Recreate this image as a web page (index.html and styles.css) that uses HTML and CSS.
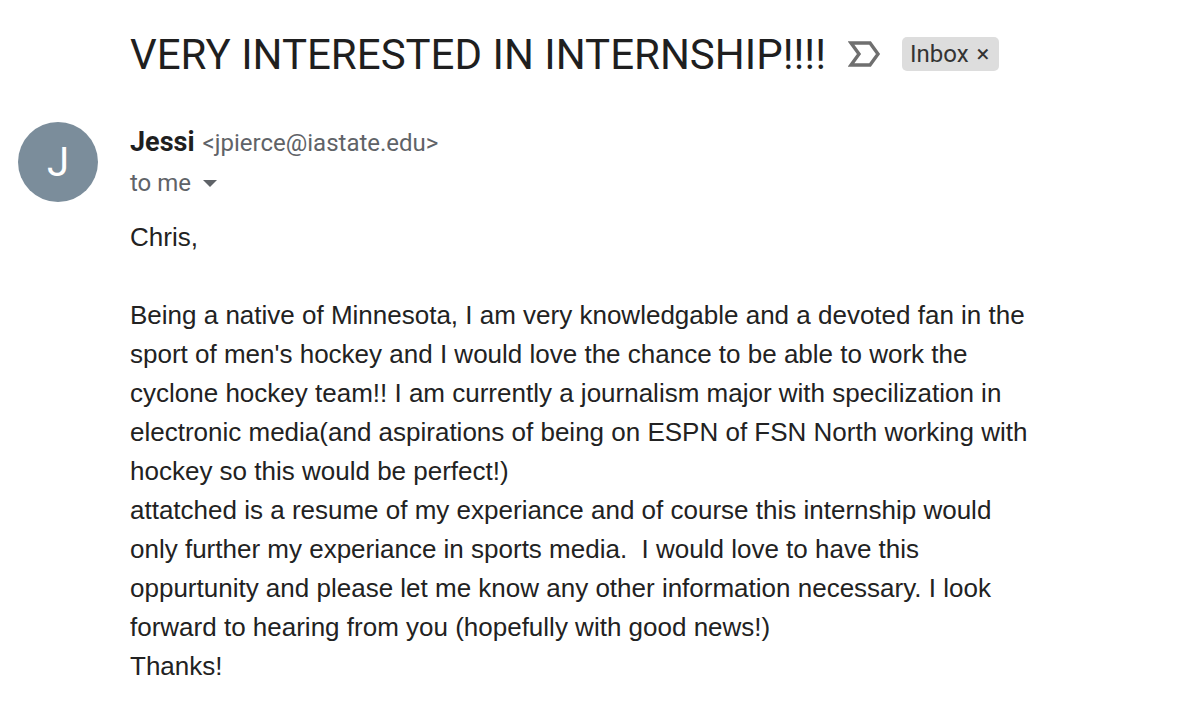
FILE: index.html
```html
<!DOCTYPE html>
<html>
<head>
<meta charset="utf-8">
<link rel="stylesheet" href="styles.css">
</head>
<body>
<div class="page">
  <div class="subject-row">
    <h1 class="subject">VERY INTERESTED IN INTERNSHIP!!!!</h1>
    <svg class="important" width="34" height="28" viewBox="0 0 34 28">
      <path d="M3 3 H22 L30 14 L22 25 H3 L11 14 Z" fill="none" stroke="#6f6f6f" stroke-width="3.4" stroke-linejoin="miter"/>
    </svg>
    <span class="chip">Inbox <span class="chip-x">×</span></span>
  </div>
  <div class="message">
    <div class="avatar">J</div>
    <div class="content">
      <div class="sender"><span class="name">Jessi</span> <span class="email">&lt;jpierce@iastate.edu&gt;</span></div>
      <div class="to">to me <span class="caret"></span></div>
      <div class="body">Chris,<br><br>Being a native of Minnesota, I am very knowledgable and a devoted fan in the<br>sport of men's hockey and I would love the chance to be able to work the<br>cyclone hockey team!! I am currently a journalism major with specilization in<br>electronic media(and aspirations of being on ESPN of FSN North working with<br>hockey so this would be perfect!)<br>attatched is a resume of my experiance and of course this internship would<br>only further my experiance in sports media.&nbsp; I would love to have this<br>oppurtunity and please let me know any other information necessary. I look<br>forward to hearing from you (hopefully with good news!)<br>Thanks!</div>
    </div>
  </div>
</div>
</body>
</html>
```
FILE: styles.css
```css
html, body {
  margin: 0;
  padding: 0;
  background: #ffffff;
}
.page {
  width: 1178px;
  height: 714px;
  overflow: hidden;
  font-family: "Liberation Sans", Arial, sans-serif;
  color: #222222;
}
.subject-row {
  display: flex;
  align-items: center;
  padding: 24px 0 0 130px;
  height: 60px;
}
.subject {
  margin: 0;
  font-family: Roboto, "Open Sans", sans-serif;
  font-weight: 400;
  font-size: 42px;
  color: #1f1f1f;
  letter-spacing: 0;
}
.important {
  margin-left: 22px;
}
.chip {
  margin-left: 20px;
  background: #dddddd;
  border-radius: 5px;
  height: 34px;
  padding: 0 10px 0 8px;
  display: flex;
  align-items: center;
  font-family: Roboto, sans-serif;
  font-size: 24px;
  color: #333;
}
.chip-x {
  margin-left: 8px;
  font-size: 24px;
}
.message {
  display: flex;
  margin-top: 38px;
}
.avatar {
  width: 80px;
  height: 80px;
  border-radius: 50%;
  background: #7b8d9b;
  color: #fff;
  margin-left: 18px;
  margin-right: 32px;
  display: flex;
  align-items: center;
  justify-content: center;
  font-family: Roboto, sans-serif;
  font-size: 40px;
}
.content {
  display: flex;
  flex-direction: column;
}
.sender {
  line-height: 40px;
  font-family: Roboto, sans-serif;
}
.name {
  font-weight: 700;
  font-size: 27px;
  color: #1f1f1f;
}
.email {
  font-size: 24px;
  color: #5f6368;
  margin-left: 4px;
}
.to {
  font-family: Roboto, sans-serif;
  font-size: 24px;
  color: #5f6368;
  line-height: 35px;
  display: flex;
  align-items: center;
}
.caret {
  display: inline-block;
  width: 0;
  height: 0;
  border-left: 7px solid transparent;
  border-right: 7px solid transparent;
  border-top: 7px solid #5f6368;
  margin-left: 12px;
}
.body {
  margin-top: 17px;
  font-size: 26px;
  line-height: 39px;
  color: #222222;
}
```
